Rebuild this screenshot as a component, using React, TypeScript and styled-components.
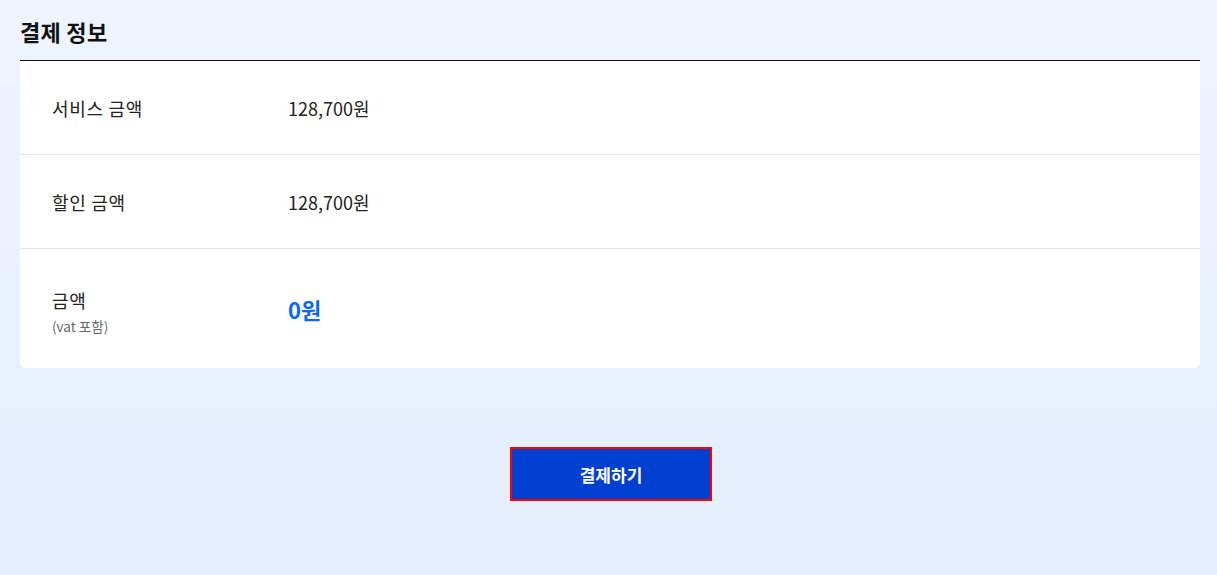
import React from 'react';
import styled, { createGlobalStyle } from 'styled-components';

const GlobalStyle = createGlobalStyle`
  html, body {
    margin: 0;
    padding: 0;
  }
  body {
    font-family: "Noto Sans CJK KR", "Noto Sans", sans-serif;
    background: linear-gradient(180deg, #eff4fe 0%, #e5eefe 100%);
    min-height: 575px;
  }
`;

const Page = styled.div`
  padding: 0 17px 0 20px;
  min-height: 575px;
  box-sizing: border-box;
`;

const Title = styled.h2`
  margin: 0;
  padding: 16px 0 14px;
  font-size: 22px;
  line-height: 30px;
  font-weight: 700;
  letter-spacing: 0.3px;
  color: #111;
  border-bottom: 1px solid #111;
`;

const Card = styled.div`
  background: #fff;
  border-radius: 0 0 6px 6px;
`;

const Row = styled.div<{ $tall?: boolean }>`
  display: flex;
  align-items: center;
  height: ${p => (p.$tall ? 119 : 93)}px;
  padding: 0 32px;
  & + & {
    border-top: 1px solid #e3e5e8;
  }
`;

const LabelCol = styled.div<{ $offset?: number }>`
  width: 236px;
  display: flex;
  flex-direction: column;
  padding-top: ${p => p.$offset ?? 0}px;
`;

const Label = styled.span`
  font-size: 18px;
  line-height: 24px;
  letter-spacing: 0.7px;
  color: #222;
`;

const SubLabel = styled.span`
  font-size: 13.5px;
  line-height: 18px;
  color: #666;
  margin-top: 5px;
`;

const Value = styled.span<{ $accent?: boolean }>`
  font-size: ${p => (p.$accent ? 22 : 18)}px;
  font-weight: ${p => (p.$accent ? 700 : 400)};
  line-height: 28px;
  color: ${p => (p.$accent ? '#0a66ff' : '#222')};
`;

const Actions = styled.div`
  display: flex;
  justify-content: center;
  padding-top: 79px;
`;

const PayButton = styled.button`
  width: 202px;
  height: 54px;
  background: #0040d0;
  border: 2px solid #ff0000;
  color: #fff;
  font-family: inherit;
  font-size: 17px;
  font-weight: 700;
  cursor: pointer;
  margin-left: 2px;
`;

export default function App() {
  return (
    <>
      <GlobalStyle />
      <Page>
        <Title>결제 정보</Title>
        <Card>
          <Row>
            <LabelCol>
              <Label>서비스 금액</Label>
            </LabelCol>
            <Value>128,700원</Value>
          </Row>
          <Row>
            <LabelCol>
              <Label>할인 금액</Label>
            </LabelCol>
            <Value>128,700원</Value>
          </Row>
          <Row $tall>
            <LabelCol $offset={5}>
              <Label>금액</Label>
              <SubLabel>(vat 포함)</SubLabel>
            </LabelCol>
            <Value $accent>0원</Value>
          </Row>
        </Card>
        <Actions>
          <PayButton>결제하기</PayButton>
        </Actions>
      </Page>
    </>
  );
}
